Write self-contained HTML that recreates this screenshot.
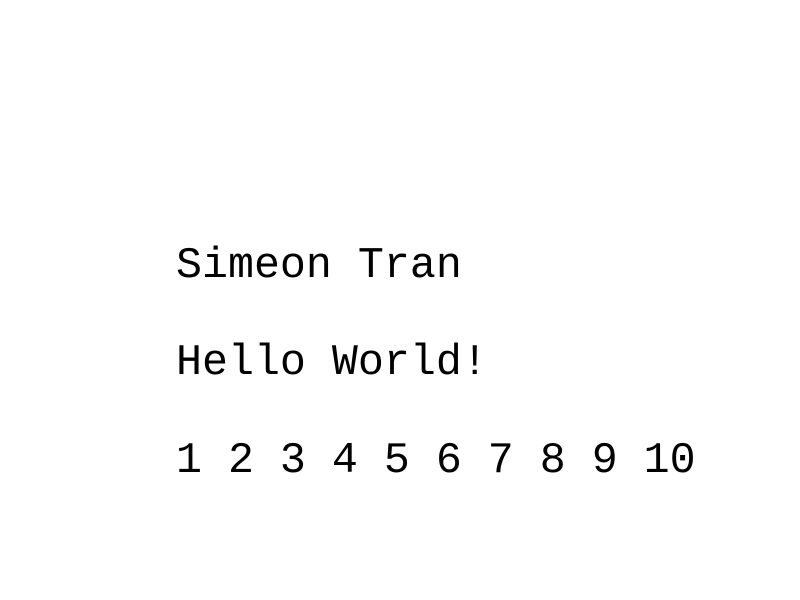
<!DOCTYPE html>
<html><head><style>
html,body{margin:0;background:#fff;width:800px;height:600px;overflow:hidden}
div{position:absolute;left:176px;font-family:"Liberation Mono",monospace;font-size:43.3px;line-height:1;color:#000;white-space:pre}
</style></head><body>
<div style="top:245px">Simeon Tran</div>
<div style="top:342px">Hello World!</div>
<div style="top:440px">1 2 3 4 5 6 7 8 9 10</div>
</body></html>
